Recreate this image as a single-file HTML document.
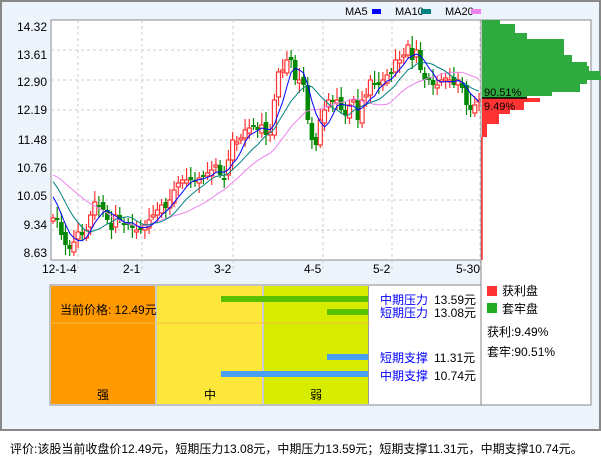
<!DOCTYPE html>
<html><head><meta charset="utf-8"><style>
body{margin:0;width:601px;height:456px;background:#fff;font-family:"Liberation Sans","Noto Sans CJK SC",sans-serif;position:relative;overflow:hidden}
.a{position:absolute}
</style></head><body>
<div class="a" style="left:0;top:0;width:597px;height:427px;border:2px solid #888;background:#eef4fb"></div>
<svg id="s" class="a" style="left:0;top:0" width="601" height="456" xmlns="http://www.w3.org/2000/svg" font-family="Liberation Sans, Noto Sans CJK SC, sans-serif">
<rect x="51" y="20" width="430" height="240" fill="#fff" stroke="#888" stroke-width="1"/>
<g stroke="#ccc" stroke-dasharray="3,3" stroke-width="1">
<line x1="51" x2="481" y1="50" y2="50"/><line x1="51" x2="481" y1="80" y2="80"/><line x1="51" x2="481" y1="110" y2="110"/><line x1="51" x2="481" y1="140" y2="140"/><line x1="51" x2="481" y1="170" y2="170"/><line x1="51" x2="481" y1="200" y2="200"/><line x1="51" x2="481" y1="230" y2="230"/>
<line x1="78" x2="78" y1="20" y2="272"/><line x1="142" x2="142" y1="20" y2="272"/><line x1="233" x2="233" y1="20" y2="272"/><line x1="323" x2="323" y1="20" y2="272"/><line x1="392" x2="392" y1="20" y2="272"/><line x1="480" x2="480" y1="20" y2="272"/>
</g>
<g font-size="12" fill="#000" text-anchor="end">
<text x="47" y="31">14.32</text><text x="47" y="59">13.61</text><text x="47" y="86">12.90</text><text x="47" y="114">12.19</text><text x="47" y="144">11.48</text><text x="47" y="172">10.76</text><text x="47" y="200">10.05</text><text x="47" y="229">9.34</text><text x="47" y="257">8.63</text>
</g>
<g font-size="12" fill="#000">
<text x="42" y="273">12-1-4</text><text x="123" y="273">2-1</text><text x="214" y="273">3-2</text><text x="304" y="273">4-5</text><text x="373" y="273">5-2</text><text x="456" y="273">5-30</text>
</g>
<g font-size="11" fill="#000">
<text x="345" y="15">MA5</text><rect x="372" y="9" width="9" height="5" fill="#00f"/>
<text x="395" y="15">MA10</text><rect x="421" y="9" width="10" height="5" fill="#008080"/>
<text x="445" y="15">MA20</text><rect x="471" y="9" width="10" height="5" fill="#ee82ee"/>
</g>
<g id="c"></g>
<rect x="481" y="20" width="110" height="385" fill="#fff" stroke="#888"/>
<g id="p"></g>
<line x1="482" x2="482" y1="137" y2="260" stroke="#f33" stroke-width="1.5"/>
<line x1="482" x2="527" y1="98" y2="98" stroke="#000" stroke-width="1.5"/>
<text x="484" y="96" font-size="11">90.51%</text><text x="484" y="110" font-size="11">9.49%</text>
<rect x="487" y="286" width="10" height="10" fill="#f33"/><text x="502" y="295" font-size="12">获利盘</text>
<rect x="487" y="303" width="10" height="10" fill="#2a2"/><text x="502" y="313" font-size="12">套牢盘</text>
<text x="487" y="336" font-size="12">获利:9.49%</text><text x="487" y="356" font-size="12">套牢:90.51%</text>
<rect x="50" y="285" width="431" height="120" fill="#fff" stroke="#888"/>
<rect x="51" y="286" width="104" height="118" fill="#f90"/>
<rect x="157" y="286" width="105" height="118" fill="#fde73a"/>
<rect x="264" y="286" width="104" height="118" fill="#d8ec00"/>
<line x1="156" x2="156" y1="286" y2="404" stroke="#999"/><line x1="263" x2="263" y1="286" y2="404" stroke="#999"/><line x1="368.5" x2="368.5" y1="286" y2="404" stroke="#999"/>
<line x1="50" x2="370" y1="323" y2="323" stroke="#f5c040"/>
<rect x="221" y="296" width="147" height="6" fill="#5bc000"/><rect x="327" y="309" width="41" height="6" fill="#5bc000"/>
<rect x="327" y="354" width="41" height="6" fill="#4a9ff0"/><rect x="221" y="371" width="147" height="6" fill="#4a9ff0"/>
<text x="60" y="314" font-size="12">当前价格: 12.49元</text>
<g font-size="12"><text x="380" y="304" fill="#00f">中期压力</text><text x="434" y="304">13.59元</text>
<text x="380" y="317" fill="#00f">短期压力</text><text x="434" y="317">13.08元</text>
<text x="380" y="362" fill="#00f">短期支撑</text><text x="434" y="362">11.31元</text>
<text x="380" y="380" fill="#00f">中期支撑</text><text x="434" y="380">10.74元</text>
<text x="97" y="399">强</text><text x="204" y="399">中</text><text x="310" y="399">弱</text></g>
<text x="10" y="453" font-size="12">评价:该股当前收盘价12.49元，短期压力13.08元，中期压力13.59元；短期支撑11.31元，中期支撑10.74元。</text>
</svg>
<script>
var d=[218,219,235,245,249,242,232,235,230,215,202,205,210,220,230,215,220,225,225,228,230,230,225,220,215,210,205,208,200,190,183,180,180,180,180,178,176,173,170,165,175,178,160,140,142,138,130,128,127,130,125,135,132,100,72,70,60,60,80,80,85,120,140,145,120,110,100,100,100,110,115,105,100,120,100,95,80,85,85,80,75,72,60,60,55,45,60,50,70,80,80,85,85,80,78,80,85,80,88,105,110,105,100];
var n=d.length,x0=53,dx=(479-53)/(n-1),h='';
for(var i=0;i<n;i++){var x=x0+i*dx,c=d[i],o=i?d[i-1]+(i%3-1)*3:c+3;var up=c<o;var t=Math.min(o,c),b=Math.max(o,c);if(b-t<2)b=t+2;var col=up?'#f33':'#080';
h+='<line x1="'+x.toFixed(1)+'" x2="'+x.toFixed(1)+'" y1="'+(t-4-(i*7%9))+'" y2="'+(b+3+(i*5%8))+'" stroke="'+col+'" stroke-width="1.2"/>';
h+=up?'<rect x="'+(x-2).toFixed(1)+'" y="'+t+'" width="4" height="'+(b-t)+'" fill="#fff" stroke="#f33" stroke-width="1.2"/>':'<rect x="'+(x-2.3).toFixed(1)+'" y="'+t+'" width="4.6" height="'+(b-t)+'" fill="#080"/>';}
function ma(k,col){var p='',pre=[205,195,185,180,175,170,165,162,160,158,160,163,165,168,170,172,174,176,178,180];for(var i=0;i<n;i++){var s=0;for(var j=0;j<k;j++){var q=i-j;s+=q>=0?d[q]:pre[(-q-1)%20];}p+=(i?'L':'M')+(x0+i*dx).toFixed(1)+' '+(s/k).toFixed(1);}return '<path d="'+p+'" fill="none" stroke="'+col+'" stroke-width="1"/>';}
h+=ma(20,'#ee82ee')+ma(10,'#008080')+ma(5,'#00f');
document.getElementById('c').innerHTML=h;
var g=[[20,24,18],[24,33,33],[33,39,45],[39,55,82],[55,62,90],[62,66,105],[66,71,107],[71,76,118],[76,80,131],[80,84,105],[84,88,98],[88,92,98],[92,96,70],[96,98,45]],r=[[98,102,58],[102,110,42],[110,114,28],[114,124,17],[124,137,5]],s='';
g.forEach(function(a){s+='<rect x="482" y="'+a[0]+'" width="'+a[2]+'" height="'+(a[1]-a[0])+'" fill="#2eaa3e"/>'});
r.forEach(function(a){s+='<rect x="482" y="'+a[0]+'" width="'+a[2]+'" height="'+(a[1]-a[0])+'" fill="#f33"/>'});
document.getElementById('p').innerHTML=s;
</script>
</body></html>
